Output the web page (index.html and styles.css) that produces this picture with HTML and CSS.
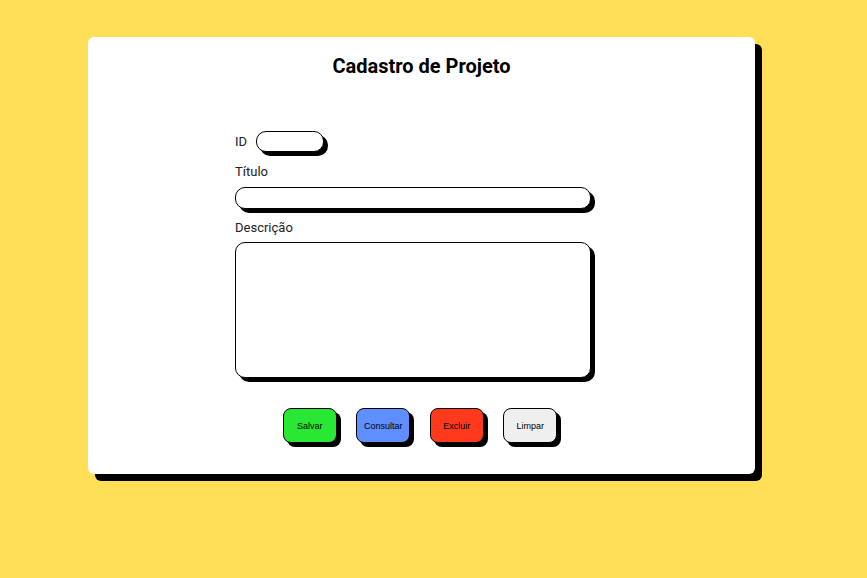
FILE: index.html
```html
<!DOCTYPE html>
<html lang="pt-BR">
<head>
<meta charset="utf-8">
<title>Cadastro de Projeto</title>
<link rel="stylesheet" href="styles.css">
</head>
<body>
<main class="card">
  <h1 class="title">Cadastro de Projeto</h1>
  <form class="form">
    <div class="id-row">
      <label class="label" for="id">ID</label>
      <input class="field field-id" id="id" type="text">
    </div>
    <label class="label label-block" for="titulo">Título</label>
    <input class="field field-wide" id="titulo" type="text">
    <label class="label label-block label-desc" for="descricao">Descrição</label>
    <textarea class="field field-area" id="descricao"></textarea>
  </form>
  <div class="actions">
    <button class="btn btn-save" type="button">Salvar</button>
    <button class="btn btn-query" type="button">Consultar</button>
    <button class="btn btn-delete" type="button">Excluir</button>
    <button class="btn btn-clear" type="button">Limpar</button>
  </div>
</main>
</body>
</html>
```
FILE: styles.css
```css
html, body {
  margin: 0;
  padding: 0;
}
body {
  background: #ffdf57;
  font-family: Roboto, "Liberation Sans", sans-serif;
  width: 867px;
  height: 578px;
  overflow: hidden;
}
.card {
  box-sizing: border-box;
  margin: 37px 0 0 88px;
  width: 667px;
  height: 437px;
  background: #fff;
  border-radius: 6px;
  box-shadow: 7px 7px 0 #000;
  padding-top: 16px;
  display: flex;
  flex-direction: column;
}
.title {
  margin: 0;
  font-size: 20px;
  line-height: 26px;
  font-weight: 700;
  text-align: center;
  color: #000;
}
.form {
  margin: 52px 0 0 147px;
  width: 356px;
  display: flex;
  flex-direction: column;
}
.id-row {
  display: flex;
  align-items: center;
  gap: 9px;
}
.label {
  font-size: 13px;
  line-height: 16px;
  color: #222;
}
.label-block {
  display: block;
  margin: 12px 0 7px;
}
.label-desc {
  margin: 11px 0 6px;
}
.field {
  box-sizing: border-box;
  border: 1px solid #000;
  background: #fff;
  box-shadow: 4px 4px 0 #000;
  border-radius: 10px;
  margin: 0;
  padding: 0 8px;
  font: 13px Roboto, sans-serif;
  outline: none;
}
.field-id {
  width: 68px;
  height: 21px;
}
.field-wide {
  width: 356px;
  height: 22px;
}
.field-area {
  width: 356px;
  height: 136px;
  resize: none;
  display: block;
}
.actions {
  margin-top: 30px;
  display: flex;
  justify-content: center;
  gap: 19.5px;
  padding-right: 3px;
}
.btn {
  box-sizing: border-box;
  width: 54px;
  height: 35px;
  border: 1px solid #000;
  border-radius: 8px;
  box-shadow: 4px 4px 0 #000;
  font: 9px "Liberation Sans", Arial, sans-serif;
  color: #000;
  padding: 0;
}
.btn-save { background: #29e834; }
.btn-query { background: #5e8eff; }
.btn-delete { background: #ff3a1c; }
.btn-clear { background: #efefef; }
```
